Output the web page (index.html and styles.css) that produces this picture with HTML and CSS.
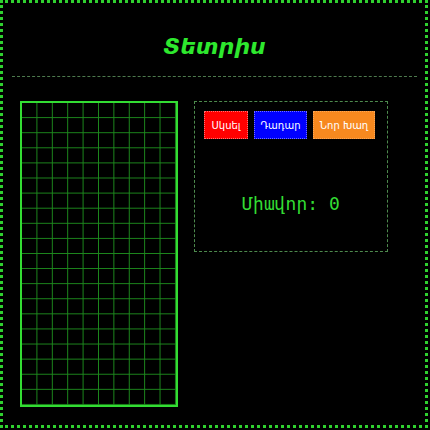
FILE: index.html
```html
<!DOCTYPE html>
<html lang="hy">
<head>
<meta charset="utf-8">
<title>Տետրիս</title>
<link rel="stylesheet" href="styles.css">
</head>
<body>
<div class="frame">
  <header class="header">
    <h1 class="title">Տետրիս</h1>
  </header>
  <hr class="rule">
  <main class="game">
    <div class="board"></div>
    <section class="panel">
      <div class="controls">
        <button class="btn btn-start">Սկսել</button>
        <button class="btn btn-pause">Դադար</button>
        <button class="btn btn-new">Նոր Խաղ</button>
      </div>
      <div class="score">Միավոր: 0</div>
    </section>
  </main>
</div>
</body>
</html>
```
FILE: styles.css
```css
html, body {
  margin: 0;
  padding: 0;
  background: #000;
}
.frame {
  width: 428px;
  height: 428px;
  box-sizing: border-box;
  border: 3px dotted #2fd12f;
  padding: 0 8px 0 9px;
  background: #000;
}
.header {
  padding-top: 29px;
}
.title {
  margin: 0;
  text-align: center;
  font-family: "DejaVu Sans", sans-serif;
  font-weight: bold;
  font-style: italic;
  font-size: 22px;
  line-height: 30px;
  color: #2ee82e;
}
.rule {
  margin: 14px 0 0 0;
  border: 0;
  border-top: 1px dashed #4d7a4d;
  height: 0;
}
.game {
  display: flex;
  align-items: flex-start;
  gap: 16px;
  padding-left: 8px;
  margin-top: 24px;
}
.board {
  flex: none;
  width: 158px;
  height: 306px;
  box-sizing: border-box;
  border: 2px solid #33dd33;
  background-color: #000;
  background-image:
    linear-gradient(to right, transparent calc(100% - 1px), #1d8a1d calc(100% - 1px)),
    linear-gradient(to bottom, transparent calc(100% - 1px), #1d8a1d calc(100% - 1px));
  background-size: 10% 5%;
}
.panel {
  flex: none;
  width: 194px;
  height: 151px;
  box-sizing: border-box;
  border: 1px dashed #4d8a4d;
  padding: 9px;
}
.controls {
  display: flex;
  gap: 6px;
}
.btn {
  flex: none;
  height: 28px;
  padding: 0;
  font-family: "DejaVu Sans", sans-serif;
  font-size: 10px;
  white-space: nowrap;
  color: #fff;
  border: 1px dotted rgba(255,255,255,0.45);
  cursor: pointer;
}
.btn-start { width: 44px; background: #ff0000; }
.btn-pause { width: 53px; background: #0000ff; }
.btn-new { width: 62px; background: #f7891f; border-color: rgba(255,255,255,0.25); }
.score {
  margin-top: 54px;
  text-align: center;
  font-family: "DejaVu Sans Mono", monospace;
  font-size: 18px;
  line-height: 22px;
  color: #33dd33;
}
```
